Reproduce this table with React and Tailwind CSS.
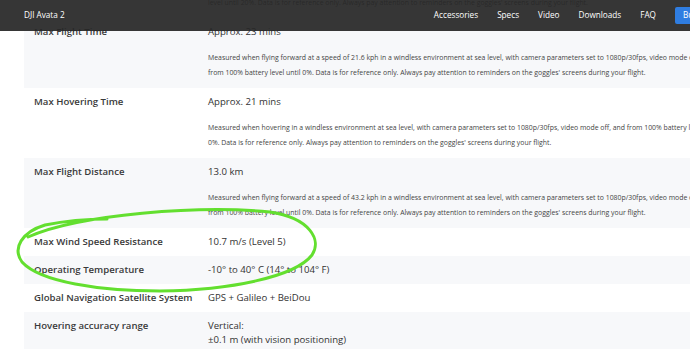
import React from 'react';

const navItems = ['Accessories', 'Specs', 'Video', 'Downloads', 'FAQ'];

const rows = [
    {
        label: 'Max Takeoff Altitude',
        value: '',
        desc: [
            'Measured when flying forward at a speed of 21.6 kph in a windless environment at sea level, with camera parameters set to 1080p/30fps, video mode off, and from 100% battery',
            "level until 20%. Data is for reference only. Always pay attention to reminders on the goggles' screens during your flight.",
        ],
    },
    {
        label: 'Max Flight Time',
        value: 'Approx. 23 mins',
        desc: [
            'Measured when flying forward at a speed of 21.6 kph in a windless environment at sea level, with camera parameters set to 1080p/30fps, video mode off, and',
            "from 100% battery level until 0%. Data is for reference only. Always pay attention to reminders on the goggles' screens during your flight.",
        ],
    },
    {
        label: 'Max Hovering Time',
        value: 'Approx. 21 mins',
        desc: [
            'Measured when hovering in a windless environment at sea level, with camera parameters set to 1080p/30fps, video mode off, and from 100% battery level until',
            "0%. Data is for reference only. Always pay attention to reminders on the goggles' screens during your flight.",
        ],
    },
    {
        label: 'Max Flight Distance',
        value: '13.0 km',
        desc: [
            'Measured when flying forward at a speed of 43.2 kph in a windless environment at sea level, with camera parameters set to 1080p/30fps, video mode off, and',
            "from 100% battery level until 0%. Data is for reference only. Always pay attention to reminders on the goggles' screens during your flight.",
        ],
    },
    { label: 'Max Wind Speed Resistance', value: '10.7 m/s (Level 5)' },
    { label: 'Operating Temperature', value: '-10° to 40° C (14° to 104° F)' },
    { label: 'Global Navigation Satellite System', value: 'GPS + Galileo + BeiDou' },
    { label: 'Hovering accuracy range', value: ['Vertical:', '±0.1 m (with vision positioning)', '±0.5 m (with GNSS positioning)'] },
];

const SpecRow = ({ row, idx }) => (
    <div className={`flex py-[7px] ${idx % 2 === 1 ? 'bg-[#f7f8fa]' : 'bg-white'}`}>
        <div className="w-[184px] shrink-0 pl-[10px] text-[9.6px] leading-[14px] font-semibold text-[#3a3a3a] whitespace-nowrap">
            {row.label}
        </div>
        <div className="flex-1 text-[9.6px] leading-[14px] text-[#333333]">
            {Array.isArray(row.value)
                ? row.value.map((v, i) => <div key={i}>{v}</div>)
                : <div>{row.value || '\u00a0'}</div>}
            {row.desc && (
                <div className="mt-[11px] mb-[1px] text-[6.9px] leading-[15px] text-[#444444]">
                    {row.desc.map((line, i) => (
                        <div key={i} className="whitespace-nowrap">{line}</div>
                    ))}
                </div>
            )}
        </div>
    </div>
);

const App = () => {
    return (
        <div className="relative w-[690px] h-[349px] overflow-hidden bg-white" style={{ fontFamily: '"Open Sans", "Liberation Sans", sans-serif' }}>

            {/* Specs table, scrolled */}
            <div className="ml-[24px] w-[820px] -mt-[52px]">
                {rows.map((row, idx) => (
                    <SpecRow key={idx} row={row} idx={idx} />
                ))}
            </div>

            {/* Sticky product nav */}
            <div className="absolute top-0 left-0 right-0 h-[31px] bg-[#272727]/[0.93] flex items-center z-10">
                <div className="pl-[24px] text-[8.2px] text-white">DJI Avata 2</div>
                <div className="ml-auto flex items-center gap-[19px] text-[8.2px] text-white whitespace-nowrap">
                    {navItems.map(item => (
                        <span key={item}>{item}</span>
                    ))}
                    <div className="h-[17px] w-[44px] shrink-0 rounded-[2px] bg-[#2f7de1] text-white flex items-center pl-[8px] -mr-[29px]">
                        Buy Now
                    </div>
                </div>
            </div>

            {/* Hand-drawn annotation */}
            <svg className="absolute inset-0 z-20 pointer-events-none" width="690" height="349" viewBox="0 0 690 349">
                <path
                    d="M 28 237 C 80 214, 200 205, 270 212 C 310 218, 322 240, 312 255 C 295 277, 230 290, 160 291 C 100 291, 40 282, 22 262 C 12 248, 22 232, 45 225 C 65 221, 90 219, 107 219"
                    fill="none"
                    stroke="#63df2f"
                    strokeWidth="3"
                    strokeLinecap="round"
                />
            </svg>
        </div>
    );
};

export default App;
